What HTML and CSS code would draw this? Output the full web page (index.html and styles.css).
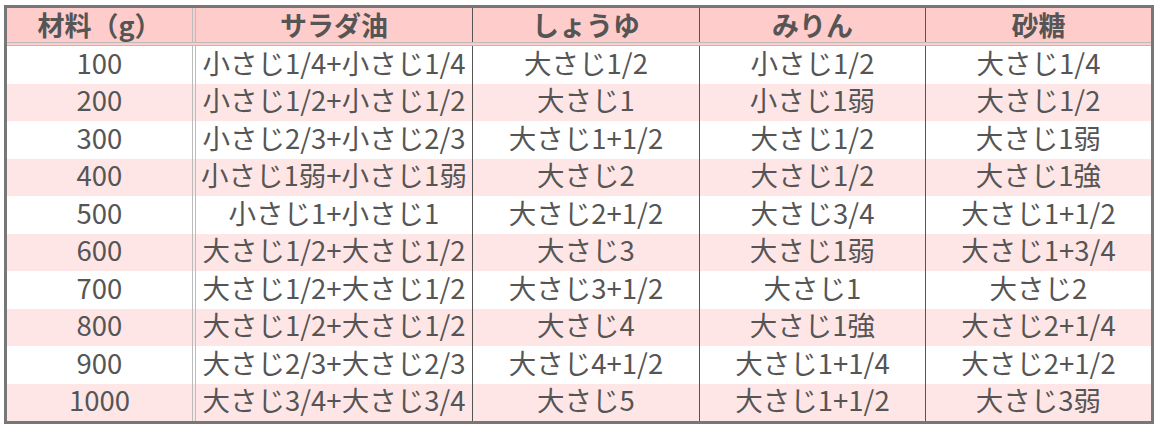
FILE: index.html
```html
<!DOCTYPE html>
<html lang="ja">
<head>
<meta charset="utf-8">
<link rel="stylesheet" href="styles.css">
</head>
<body>
<div class="table">
  <div class="row head">
    <div class="c c1">材料（g）</div><div class="c">サラダ油</div><div class="c">しょうゆ</div><div class="c">みりん</div><div class="c last">砂糖</div>
  </div>
  <div class="row">
    <div class="c c1">100</div><div class="c">小さじ1/4+小さじ1/4</div><div class="c">大さじ1/2</div><div class="c">小さじ1/2</div><div class="c last">大さじ1/4</div>
  </div>
  <div class="row alt">
    <div class="c c1">200</div><div class="c">小さじ1/2+小さじ1/2</div><div class="c">大さじ1</div><div class="c">小さじ1弱</div><div class="c last">大さじ1/2</div>
  </div>
  <div class="row">
    <div class="c c1">300</div><div class="c">小さじ2/3+小さじ2/3</div><div class="c">大さじ1+1/2</div><div class="c">大さじ1/2</div><div class="c last">大さじ1弱</div>
  </div>
  <div class="row alt">
    <div class="c c1">400</div><div class="c">小さじ1弱+小さじ1弱</div><div class="c">大さじ2</div><div class="c">大さじ1/2</div><div class="c last">大さじ1強</div>
  </div>
  <div class="row">
    <div class="c c1">500</div><div class="c">小さじ1+小さじ1</div><div class="c">大さじ2+1/2</div><div class="c">大さじ3/4</div><div class="c last">大さじ1+1/2</div>
  </div>
  <div class="row alt">
    <div class="c c1">600</div><div class="c">大さじ1/2+大さじ1/2</div><div class="c">大さじ3</div><div class="c">大さじ1弱</div><div class="c last">大さじ1+3/4</div>
  </div>
  <div class="row">
    <div class="c c1">700</div><div class="c">大さじ1/2+大さじ1/2</div><div class="c">大さじ3+1/2</div><div class="c">大さじ1</div><div class="c last">大さじ2</div>
  </div>
  <div class="row alt">
    <div class="c c1">800</div><div class="c">大さじ1/2+大さじ1/2</div><div class="c">大さじ4</div><div class="c">大さじ1強</div><div class="c last">大さじ2+1/4</div>
  </div>
  <div class="row">
    <div class="c c1">900</div><div class="c">大さじ2/3+大さじ2/3</div><div class="c">大さじ4+1/2</div><div class="c">大さじ1+1/4</div><div class="c last">大さじ2+1/2</div>
  </div>
  <div class="row alt">
    <div class="c c1">1000</div><div class="c">大さじ3/4+大さじ3/4</div><div class="c">大さじ5</div><div class="c">大さじ1+1/2</div><div class="c last">大さじ3弱</div>
  </div>
</div>
</body>
</html>
```
FILE: styles.css
```css
html, body {
  margin: 0;
  padding: 0;
  background: #ffffff;
}
body {
  padding: 5px 0 0 4px;
}
.table {
  width: 1150px;
  box-sizing: border-box;
  border: 3px solid #777777;
  font-family: "Noto Sans CJK JP", "Noto Sans", sans-serif;
  color: #555555;
  font-size: 27.5px;
}
.row {
  display: grid;
  grid-template-columns: 189px 277px 227px 226px 225px;
  height: 37.5px;
  background: #ffffff;
}
.row.alt {
  background: #ffe6e6;
}
.row.head {
  height: 38px;
  background: #ffcccc;
  font-weight: bold;
  font-size: 27px;
  box-sizing: border-box;
  border-bottom: 4px double #bbbbbb;
}
.c {
  box-sizing: border-box;
  border-right: 1px solid #555555;
  display: flex;
  align-items: center;
  justify-content: center;
  white-space: nowrap;
  line-height: 1;
  padding-bottom: 5px;
}
.head .c {
  padding-bottom: 2px;
}
.c1 {
  border-right: 4px double #bbbbbb;
}
.c.last {
  border-right: none;
}
```
